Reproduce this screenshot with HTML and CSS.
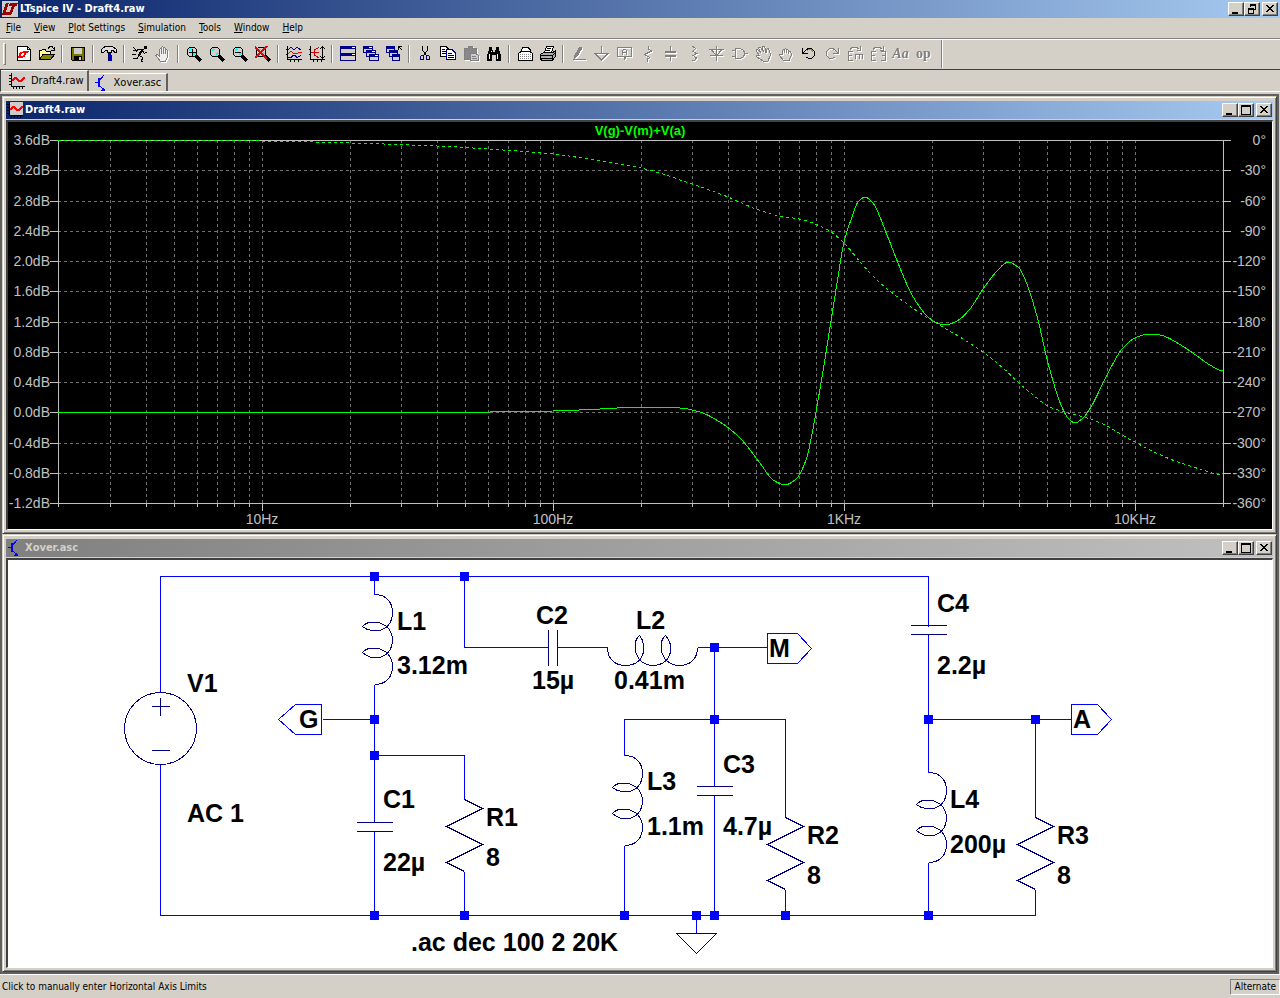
FILE: index.html
```html
<!DOCTYPE html>
<html lang="en">
<head>
  <meta charset="UTF-8">
  <meta name="viewport" content="width=device-width, initial-scale=1.0">
  <title>LTspice IV - Draft4.raw</title>
  <link rel="stylesheet" href="styles.css">
</head>
<body>
  <!-- Shared icons and schematic symbols -->
  <svg class="defs" width="0" height="0" aria-hidden="true">
    <symbol id="logo" viewBox="0 0 16 16">
      <rect width="16" height="16" fill="#ccc"/>
      <path d="M4 2H7L4 11H8L7 14H0ZM8 2H16L15 5H13L9 14H7L10 5H7Z" fill="#900"/>
    </symbol>
    <symbol id="wave" viewBox="0 0 16 16">
      <rect x="2" width="14" height="13" fill="#ccc"/>
      <path d="M2.500 0V13.500H16M0 2.500H2M0 5.500H2M0 8.500H2M0 11.500H2M4.500 14V16M7.500 14V16M10.500 14V16M13.500 14V16" stroke="#000" fill="none"/>
      <path d="M3 8V6H4V5H5V4H8V5H9V6H10V7H12V6H13V5H14V4H16V6H15V7H14V8H13V9H9V8H8V7H7V6H6V7H5V8Z" fill="#f00"/>
    </symbol>
    <symbol id="transistor" viewBox="0 0 16 16">
      <path d="M1 7.500H5M5 6L10 0M5 10L9 14" stroke="#00f" fill="none"/>
      <path d="M4 3H6V12H4ZM11 16H7L10 12Z" fill="#00f"/>
    </symbol>
    <symbol id="min" viewBox="0 0 12 10"><path d="M2 8H8V10H2Z"/></symbol>
    <symbol id="max" viewBox="0 0 12 10"><path d="M1 0H11V10H1ZM2 2V9H10V2Z" fill-rule="evenodd"/></symbol>
    <symbol id="restore" viewBox="0 0 12 10"><path d="M4 0H10V6H8V5H9V2H5V3H4ZM2 4H8V10H2ZM3 6V9H7V6Z" fill-rule="evenodd"/></symbol>
    <symbol id="close" viewBox="0 0 12 10"><path d="M2 1H4V2H5V3H7V2H8V1H10V2H9V3H8V4H7V5H8V6H9V7H10V8H8V7H7V6H5V7H4V8H2V7H3V6H4V5H5V4H4V3H3V2H2Z"/></symbol>
    <symbol id="lens" viewBox="0 0 16 16">
      <circle cx="6" cy="6" r="5" fill="#d4d0c8" stroke="#000"/>
      <path d="M3 5L5 3M7 9L9 7" stroke="#0ff" stroke-width="2"/>
      <path d="M10 10L15 15" stroke="#000" stroke-width="3"/>
    </symbol>
    <g id="coil">
      <path d="M0 0C14 0 18 10 18 18C18 26 15 32 8 35C1 38 -7 36 -12 32C-7 26 4 26 12 32C16 35 18 41 18 45C18 53 15 59 8 62C1 65 -7 63 -12 58C-7 52 4 52 12 58C16 62 18 67 18 72C18 82 12 90 0 90"/>
    </g>
    <path id="resistor" d="M0 0L18 9L-18 27L18 45L-18 63L0 72"/>
    <path id="capacitor" d="M-18 0H18M-18 9H18"/>
    <rect id="node" x="-5" y="-5" width="9" height="9"/>
  </svg>

  <header class="titlebar">
    <svg class="app-icon"><use href="#logo"/></svg>
    <h1>LTspice IV - Draft4.raw</h1>
    <div class="controls">
      <button aria-label="Minimize"><svg><use href="#min"/></svg></button>
      <button aria-label="Restore"><svg><use href="#restore"/></svg></button>
      <button class="close" aria-label="Close"><svg><use href="#close"/></svg></button>
    </div>
  </header>

  <nav class="menu">
    <button><u>F</u>ile</button>
    <button><u>V</u>iew</button>
    <button><u>P</u>lot Settings</button>
    <button><u>S</u>imulation</button>
    <button><u>T</u>ools</button>
    <button><u>W</u>indow</button>
    <button><u>H</u>elp</button>
  </nav>

  <div class="toolbar">
    <span class="grip"></span>
    <button aria-label="New schematic"><svg viewBox="0 0 16 16"><path d="M1.500 .5H11.500L14.500 3.500V14.500H1.500Z" fill="#fff" stroke="#000"/><path d="M11.500 1V3.500H14" stroke="#000"/><path d="M4 6H6L5 10H8L7 12H2ZM7 5H13L12 7H10L9 11H7L8 7H6Z" fill="#f00"/></svg></button>
    <button aria-label="Open"><svg viewBox="0 0 16 16"><path d="M.5 13V4.500H2L3.500 3.500H6L7.500 5.500H11.500V8" fill="#ff9" stroke="#000"/><path d="M.5 13.500L4 8.500H15.500L11.500 13.500Z" fill="#880" stroke="#000"/><path d="M9 2.500L11 .5H13L15 3M15.500 1V4.500H12" stroke="#000"/></svg></button>
    <span class="sep"></span>
    <button aria-label="Save"><svg viewBox="0 0 16 16"><path d="M1.500 1.500H14.500V14.500H2.500L1.500 13.500Z" fill="#770" stroke="#000"/><path d="M4 2H12V8H4Z" fill="#ccc"/><path d="M4 10H12V14H4Z" fill="#000"/><path d="M9 11H11V14H9Z" fill="#ccc"/></svg></button>
    <span class="sep"></span>
    <button aria-label="Control panel"><svg viewBox="0 0 16 16"><path d="M.5 3.500L4 .5H11.500L15.500 3.500V6.500H13.500L12.500 4.500H10.500V6.500H6.500V4.500H4.500L2.500 6.500H.5Z" fill="#ddd" stroke="#000"/><path d="M7 7H10V9H11V15H7V9H7Z" fill="#00c"/><path d="M7.500 8V15" stroke="#006"/></svg></button>
    <span class="sep"></span>
    <button aria-label="Run"><svg viewBox="0 0 16 16"><path d="M12 0H15V3H12Z" fill="#000"/><path d="M11 3L7 9" stroke="#000" stroke-width="2"/><path d="M7 9.500L10.500 11.500L9.500 15.500H11M7 9L5 12.500H1M10 3.500H6L4 5.500M11 5L12.500 7.500L15 6M1 1.500L4 3.500M1 4.500H4M0 8.500H4" stroke="#000"/></svg></button>
    <button class="off" disabled aria-label="Halt"><svg viewBox="0 0 16 16"><path d="M4.500 9.500V3.500Q5.500 1.500 6.500 3.500V1.500Q7.500 -.5 8.500 1.500V2Q10 .5 10.500 3V4Q12 2.500 12.500 5V11L10.500 15.500H5.500L1 9.500Q1.500 7.500 4.500 10Z" fill="#eee"/><path d="M6.500 3V8M8.500 2V8M10.500 4V8"/></svg></button>
    <span class="sep"></span>
    <button aria-label="Zoom in"><svg viewBox="0 0 16 16"><use href="#lens"/><path d="M3 6.500H10M6.500 3V10" stroke="#000"/></svg></button>
    <button aria-label="Pan"><svg viewBox="0 0 16 16"><use href="#lens"/></svg></button>
    <button aria-label="Zoom out"><svg viewBox="0 0 16 16"><use href="#lens"/><path d="M3 6.500H9" stroke="#000"/></svg></button>
    <button aria-label="Zoom full extents"><svg viewBox="0 0 16 16"><use href="#lens"/><path d="M0 1L12 13M12 0L0 12" stroke="#e00" stroke-width="2"/></svg></button>
    <span class="sep"></span>
    <button aria-label="Autorange"><svg viewBox="0 0 16 16"><path d="M1.500 0V13.500H16M0 3.500H2M0 8.500H2M4.500 13V16M8.500 13V16M12.500 13V16" stroke="#000"/><path d="M2 4L5 1L8 4L11 1L15 4M2 11.500H5L7 9.500H9L11 11.500L15 9.500" stroke="#009"/><path d="M2 7.500L5 5.500L8 7.500H11L13 6.500H16" stroke="#f00"/></svg></button>
    <button aria-label="Autorange axis"><svg viewBox="0 0 16 16"><path d="M1.500 0V13.500H16M0 3.500H2M0 8.500H2M4.500 13V16M8.500 13V16M12.500 13V16M13.500 1V12M11 3L13.500 .5L16 3M11 10L13.500 12.500L16 10" stroke="#000"/><path d="M10 1.500L5.500 4V9L10 12M2 6.500H10" stroke="#c00"/></svg></button>
    <span class="sep"></span>
    <button aria-label="Tile"><svg viewBox="0 0 16 16"><path d="M.5 .5H15.500V14.500H.5ZM0 7.500H16" stroke="#008"/><path d="M0 0H16V3H0ZM0 7H16V10H0Z" fill="#008"/><path d="M12 1.500H15M12 8.500H15" stroke="#fff"/></svg></button>
    <button aria-label="Cascade"><svg viewBox="0 0 16 16"><path d="M.5 .5H9.500V6.500H.5ZM3.500 4.500H12.500V10.500H3.500ZM6.500 8.500H15.500V14.500H6.500Z" fill="#d4d0c8" stroke="#008"/><path d="M0 0H10V3H0ZM3 4H13V7H3ZM6 8H16V11H6Z" fill="#008"/><path d="M6 1.500H9M9 5.500H12M12 9.500H15" stroke="#fff"/></svg></button>
    <button aria-label="Close all"><svg viewBox="0 0 16 16"><path d="M.5 .5H8.500V6.500H.5ZM3.500 4.500H11.500V10.500H3.500ZM6.500 8.500H13.500V14.500H6.500Z" fill="#d4d0c8" stroke="#008"/><path d="M0 0H9V3H0ZM3 4H12V7H3ZM6 8H14V11H6Z" fill="#008"/><path d="M12.500 4V.5H16M12.500 .5L16 4" stroke="#000"/></svg></button>
    <span class="sep"></span>
    <button aria-label="Cut"><svg viewBox="0 0 16 16"><path d="M5.500 0V4L9.500 10M10.500 0V4L6.500 10" stroke="#000"/><path d="M4.500 9.500H6.500V13.500H3.500V10.500ZM9.500 9.500H11.500L12.500 10.500V13.500H9.500Z" stroke="#008"/></svg></button>
    <button aria-label="Copy"><svg viewBox="0 0 16 16"><path d="M.5 .5H6L8.500 3V10.500H.5Z" fill="#fff" stroke="#000"/><path d="M6.500 3.500H12L15.500 7V13.500H6.500Z" fill="#fff" stroke="#008"/><path d="M2 3.500H5M2 5.500H6M2 7.500H6M8 7.500H12M8 9.500H14M8 11.500H14" stroke="#000"/></svg></button>
    <button class="off" disabled aria-label="Paste"><svg viewBox="0 0 16 16"><path d="M1 2H5V0H9V2H13V7H7V13H1Z" fill="#888"/><path d="M7.500 7.500H12.500L15.500 9.500V14.500H7.500ZM9 10.500H13M9 12.500H14" fill="#ccc"/></svg></button>
    <button aria-label="Find"><svg viewBox="0 0 16 16"><path d="M3 1H6V4H7V6H9V4H10V1H13V4L15 9V15H10V9H6V15H1V9L3 4Z" fill="#000"/><path d="M3.500 8V13M11.500 8V13M5.500 5V6" stroke="#fff"/></svg></button>
    <span class="sep"></span>
    <button aria-label="Print setup"><svg viewBox="0 0 16 16"><path d="M3.500 7L5.500 1.500H11L13.500 4V7M1.500 7.500L3.500 5.500H13.500L15.500 7.500V14.500H1.500Z" fill="#fff" stroke="#000"/><path d="M3 8.500H14M3 10.500H14M3 12.500H14" stroke="#888" stroke-dasharray="1 1"/></svg></button>
    <button aria-label="Print"><svg viewBox="0 0 16 16"><path d="M4.500 7L6.500 .5H13.500L11.500 7" fill="#fff" stroke="#000"/><path d="M.5 8.500L3.500 6.500H13L15.500 4.500V10L12.500 14.500H1.500L.5 12.500Z" fill="#aaa" stroke="#000"/><path d="M1 9.500H12.500V14M12.500 9.500L15 7M7 2.500H11M6 4.500H10M1 12.500H12" stroke="#000"/><path d="M7 11H10V12H7Z" fill="#fc0"/></svg></button>
    <span class="sep"></span>
    <button class="off" disabled aria-label="Wire"><svg viewBox="0 0 16 16"><path d="M9 1L4 9L3 13L6 10L11 2Z" fill="#888"/><path d="M2 13.500H15"/></svg></button>
    <button class="off" disabled aria-label="Ground"><svg viewBox="0 0 16 16"><path d="M7.500 0V7.500M1 7.500H14L7.500 14Z"/></svg></button>
    <button class="off" disabled aria-label="Label net"><svg viewBox="0 0 16 16"><path d="M.5 1.500H14.500V10.500H9L7.500 14V10.500H.5ZM5.500 9V4.500L6.500 3.500H8.500L9.500 4.500V9M5.500 6.500H9"/></svg></button>
    <button class="off" disabled aria-label="Resistor"><svg viewBox="0 0 16 16"><path d="M8.500 0V3L11.500 5L4.500 8.500L9.500 11.500L7.500 13V16"/></svg></button>
    <button class="off" disabled aria-label="Capacitor"><svg viewBox="0 0 16 16"><path d="M7.500 0V6M7.500 10V15"/><path d="M2 6H13M2 10H13" stroke-width="2"/></svg></button>
    <button class="off" disabled aria-label="Inductor"><svg viewBox="0 0 16 16"><path d="M6 .5H7L9.500 2.500L7 5.500L10.500 7.500L7 9.500L10.500 12L8.500 14.500H6"/></svg></button>
    <button class="off" disabled aria-label="Diode"><svg viewBox="0 0 16 16"><path d="M7.500 0V15M0 3.500H15M2 3.500L7.500 9.500L13 3.500M1 9.500H14"/></svg></button>
    <button class="off" disabled aria-label="Component"><svg viewBox="0 0 16 16"><path d="M3.500 2.500H8Q12.500 4 12.500 7.500Q12.500 11 8 12.500H3.500ZM0 4.500H3M0 10.500H3M12 7.500H16"/></svg></button>
    <button class="off" disabled aria-label="Move"><svg viewBox="0 0 16 16"><path d="M5 10L1 5Q1 3 3 4L6 7L3.500 2Q4 0 6 2L8.500 6L7.500 1Q9 -1 10 2L11 7L12 3Q14 2 14 4L15.500 9L13 15H8L2 11Q0 9 5 10"/></svg></button>
    <button class="off" disabled aria-label="Drag"><svg viewBox="0 0 16 16"><path d="M4.500 9V4.500Q5.500 2.500 6.500 4V7V3.500Q8 1.500 8.500 4V7V4Q10 2.500 10.500 5V7Q12.500 4 13 7V10L11 14.500H5.500L1.500 9.500Q1.500 7.500 4.500 9"/></svg></button>
    <button aria-label="Undo"><svg viewBox="0 0 16 16"><path d="M1.500 2V7.500H7M1.500 7.500L5.500 3.500L7.500 2.500H10.500L13.500 5.500V9.500L10.500 12.500H7.500L5.500 11" stroke="#000"/><path d="M6 4.500L8 3.500H10L12 5.500" stroke="#990"/></svg></button>
    <button class="off" disabled aria-label="Redo"><svg viewBox="0 0 16 16"><path d="M14.500 2V7.500H9M14.500 7.500L10.500 3.500L8.500 2.500H5.500L2.500 5.500V9.500L5.500 12.500H8.500L10.500 11"/></svg></button>
    <button class="off" disabled aria-label="Rotate"><svg viewBox="0 0 16 16"><path d="M6 5.500H1.500V14.500H6M1.500 9.500H5M15.500 13V8.500H8.500V13M12.500 9V13M3 3.500L5 1.500H10L12.500 3.500M13.500 0V4.500H10"/></svg></button>
    <button class="off" disabled aria-label="Mirror"><svg viewBox="0 0 16 16"><path d="M6 5.500H1.500V14.500H6M1.500 9.500H5M11 5.500H15.500V14.500H11M15.500 9.500H12M3 3.500L5 1.500H10L12.500 3.500M13.500 0V4.500H10"/></svg></button>
    <button class="off glyph" disabled aria-label="Text"><i>Aa</i></button>
    <button class="off glyph" disabled aria-label="SPICE directive">op</button>
    <span class="toolbar-end"></span>
  </div>

  <div class="tabs">
    <button class="tab active"><svg><use href="#wave"/></svg>Draft4.raw</button>
    <button class="tab"><svg><use href="#transistor"/></svg>Xover.asc</button>
  </div>

  <main class="workspace">
    <section class="window">
      <div class="titlebar">
        <svg class="app-icon"><use href="#wave"/></svg>
        <h2>Draft4.raw</h2>
        <div class="controls">
          <button aria-label="Minimize"><svg><use href="#min"/></svg></button>
          <button aria-label="Maximize"><svg><use href="#max"/></svg></button>
          <button class="close" aria-label="Close"><svg><use href="#close"/></svg></button>
        </div>
      </div>
      <div class="view plot">
        <svg viewBox="8 122 1264 407">
          <path id="grid" class="grid"/>
          <path id="axes" class="axes"/>
          <g id="labels" class="labels"></g>
          <text class="trace-name" x="640" y="135">V(g)-V(m)+V(a)</text>
          <path id="phase" class="trace dashed"/>
          <path id="gain" class="trace"/>
        </svg>
      </div>
    </section>

    <section class="window inactive">
      <div class="titlebar">
        <svg class="app-icon"><use href="#transistor"/></svg>
        <h2>Xover.asc</h2>
        <div class="controls">
          <button aria-label="Minimize"><svg><use href="#min"/></svg></button>
          <button aria-label="Maximize"><svg><use href="#max"/></svg></button>
          <button class="close" aria-label="Close"><svg><use href="#close"/></svg></button>
        </div>
      </div>
      <div class="view schematic">
        <svg viewBox="8 560 1264 407">
          <!-- Wires and net flags -->
          <g class="wires" transform="translate(.5 .5)">
            <path d="M160 692V576H928V626M160 763V915H1035V889M374 576V594M374 684V822M374 831V915M464 576V647H548M557 647H607M697 647H767M322 719H374M374 755H464V799M464 871V915M714 647V786M714 795V915M624 755V719H785V817M624 845V915M785 889V915M928 634V772M928 862V915M928 719H1071M1035 719V817M696 915V933"/>
            <path d="M321 704H295L278 719L295 734H321ZM767 633H797L811 648L797 663H767ZM1071 704H1097L1111 719L1097 734H1071Z"/>
          </g>
          <!-- Components -->
          <g class="parts" transform="translate(.5 .5)">
            <circle cx="160" cy="728" r="36"/>
            <path d="M151 706H169M160 697V715M151 750H169"/>
            <use href="#coil" x="374" y="594"/>
            <use href="#coil" transform="matrix(0 1 1 0 607 647)"/>
            <use href="#coil" x="624" y="755"/>
            <use href="#coil" x="928" y="772"/>
            <use href="#resistor" x="464" y="799"/>
            <use href="#resistor" x="785" y="817"/>
            <use href="#resistor" x="1035" y="817"/>
            <use href="#capacitor" x="374" y="822"/>
            <use href="#capacitor" x="714" y="786"/>
            <use href="#capacitor" x="928" y="625"/>
            <use href="#capacitor" transform="matrix(0 1 1 0 548 647)"/>
            <path d="M676 933H716L696 953Z"/>
          </g>
          <!-- Junctions -->
          <g class="nodes">
            <use href="#node" x="375" y="577"/><use href="#node" x="465" y="577"/>
            <use href="#node" x="375" y="720"/><use href="#node" x="375" y="756"/>
            <use href="#node" x="715" y="648"/><use href="#node" x="715" y="720"/>
            <use href="#node" x="929" y="720"/><use href="#node" x="1036" y="720"/>
            <use href="#node" x="375" y="916"/><use href="#node" x="465" y="916"/>
            <use href="#node" x="625" y="916"/><use href="#node" x="697" y="916"/>
            <use href="#node" x="715" y="916"/><use href="#node" x="786" y="916"/>
            <use href="#node" x="929" y="916"/>
          </g>
          <g class="names">
            <text x="187" y="692">V1</text><text x="187" y="822">AC 1</text>
            <text x="397" y="630">L1</text><text x="397" y="674">3.12m</text>
            <text x="299" y="728">G</text><text x="769" y="657">M</text><text x="1073" y="728">A</text>
            <text x="383" y="808">C1</text><text x="383" y="871">22µ</text>
            <text x="486" y="826">R1</text><text x="486" y="866">8</text>
            <text x="536" y="624">C2</text><text x="532" y="689">15µ</text>
            <text x="636" y="629">L2</text><text x="614" y="689">0.41m</text>
            <text x="647" y="790">L3</text><text x="647" y="835">1.1m</text>
            <text x="723" y="773">C3</text><text x="723" y="835">4.7µ</text>
            <text x="807" y="844">R2</text><text x="807" y="884">8</text>
            <text x="937" y="612">C4</text><text x="937" y="674">2.2µ</text>
            <text x="950" y="808">L4</text><text x="950" y="853">200µ</text>
            <text x="1057" y="844">R3</text><text x="1057" y="884">8</text>
            <text x="411" y="951">.ac dec 100 2 20K</text>
          </g>
        </svg>
      </div>
    </section>
  </main>

  <footer class="status">
    <span>Click to manually enter Horizontal Axis Limits</span>
    <span class="panel">Alternate</span>
  </footer>

  <script src="plot.js"></script>
</body>
</html>
```
FILE: styles.css
```css
/* Basic reset */
* {
  margin: 0;
  padding: 0;
  box-sizing: border-box;
}

body {
  height: 100vh;
  display: flex;
  flex-direction: column;
  background-color: #d4d0c8;
  color: #000;
  font-family: "DejaVu Sans Condensed", "DejaVu Sans", sans-serif;
  font-size: 10px;
  line-height: 14px;
}

button {
  border: none;
  background: none;
  color: inherit;
  font: inherit;
}

svg {
  display: block;
  fill: none;
  shape-rendering: crispEdges;
}

.defs {
  position: absolute;
}

/* Title bars */
.titlebar {
  flex: none;
  height: 18px;
  padding: 0 2px;
  display: flex;
  align-items: center;
  gap: 2px;
  background: linear-gradient(to right, #0a246a, #a6caf0);
  color: #fff;
}

.titlebar h1,
.titlebar h2 {
  flex: 1;
  font-size: 11px;
  font-weight: bold;
}

.app-icon {
  width: 16px;
  height: 16px;
}

.controls {
  display: flex;
}

.controls button {
  width: 16px;
  height: 14px;
  padding: 1px;
  background-color: #d4d0c8;
  border: 1px solid;
  border-color: #fff #404040 #404040 #fff;
  box-shadow: inset -1px -1px #808080;
}

.controls .close {
  margin-left: 2px;
}

.controls svg {
  width: 12px;
  height: 10px;
  fill: #000;
}

/* Menu */
.menu {
  flex: none;
  height: 21px;
  padding: 0 6px;
  display: flex;
  align-items: center;
  gap: 13px;
  border-bottom: 1px solid #808080;
}

/* Toolbar */
.toolbar {
  flex: none;
  height: 31px;
  padding: 0 0 2px 3px;
  display: flex;
  align-items: center;
  border-top: 1px solid #fff;
  border-bottom: 1px solid #404040;
}

.toolbar button {
  width: 23px;
  height: 22px;
  display: flex;
  align-items: center;
  justify-content: center;
}

.toolbar svg {
  width: 16px;
  height: 16px;
}

.toolbar .off {
  color: #808080;
  filter: drop-shadow(1px 1px 0 #fff);
}

.off svg {
  stroke: #808080;
}

.toolbar .glyph {
  font: bold 14px "Liberation Serif", serif;
}

.grip {
  width: 3px;
  height: 22px;
  margin-right: 6px;
  border: 1px solid;
  border-color: #fff #808080 #808080 #fff;
}

.sep {
  width: 2px;
  height: 18px;
  margin: 0 3px;
  border-left: 1px solid #808080;
  border-right: 1px solid #fff;
}

.toolbar-end {
  height: 28px;
  margin-left: 6px;
  border-left: 1px solid #808080;
  border-right: 1px solid #fff;
}

/* Document tabs */
.tabs {
  flex: none;
  height: 22px;
  display: flex;
  align-items: flex-end;
  border-left: 1px solid #404040;
  border-bottom: 1px solid #fff;
}

.tab {
  height: 18px;
  padding: 0 5px;
  display: flex;
  align-items: center;
  gap: 4px;
  border-right: 2px solid #606060;
  border-top: 1px solid #fff;
  font-size: 11px;
}

.tab.active {
  height: 21px;
  padding: 0 3px 1px 8px;
  gap: 6px;
}

.tab svg {
  width: 16px;
  height: 16px;
}

/* Child windows */
.workspace {
  flex: 1;
  min-height: 0;
  margin: 2px 1px 0 0;
  display: flex;
  flex-direction: column;
  border: 2px solid #606060;
}

.window {
  flex: 1 1 0;
  min-height: 0;
  padding: 3px;
  display: flex;
  flex-direction: column;
  border: 1px solid;
  border-color: #d4d0c8 #404040 #404040 #d4d0c8;
  box-shadow: inset 1px 1px #fff, inset -1px -1px #808080;
}

.window .titlebar {
  margin: 1px 0;
  padding: 0 1px;
}

.inactive .titlebar {
  background: linear-gradient(to right, #808080, #c0c0c0);
  color: #d4d0c8;
}

.view {
  flex: 1;
  min-height: 0;
  border: 1px solid;
  border-width: 2px 1px 1px 2px;
  border-color: #404040 #fff #fff #404040;
}

.view svg {
  width: 100%;
  height: 100%;
}

/* Bode plot */
.plot {
  background-color: #000;
}

.grid {
  stroke: #707070;
  stroke-dasharray: 3 3;
}

.axes {
  stroke: #c0c0c0;
}

.labels {
  fill: #c0c0c0;
  font: 14px "Liberation Sans", Arial, sans-serif;
}

.end {
  text-anchor: end;
}

.middle,
.trace-name {
  text-anchor: middle;
}

.trace-name {
  fill: #0f0;
  font: bold 13px "Liberation Sans", Arial, sans-serif;
}

.trace {
  stroke: #0f0;
}

.dashed {
  stroke-dasharray: 3 3;
}

/* Schematic */
.schematic {
  background-color: #fff;
}

.wires {
  stroke: #00f;
}

.parts {
  stroke: #000080;
}

.nodes {
  fill: #00f;
}

.names {
  fill: #000;
  font: bold 25px "Liberation Sans", Arial, sans-serif;
}

/* Status bar */
.status {
  flex: none;
  height: 24px;
  padding-left: 2px;
  display: flex;
  align-items: center;
  justify-content: space-between;
  border-top: 1px solid #fff;
}

.panel {
  padding: 0 3px;
  border: 1px solid;
  border-color: #808080 #fff #fff #808080;
}
```
FILE: plot.js
```js
const left = 58, right = 1223, top_ = 140, bottom = 503;
const decade = 291, step = 30.25;

const gain = [
  [58, 412], [490, 412], [553, 411], [600, 409], [641, 407], [680, 408], [700, 412],
  [720, 422], [740, 438], [760, 463], [773, 480], [785, 485], [796, 479], [806, 460],
  [820, 389], [831, 321], [838, 277], [844, 242], [852, 217], [858, 202], [865, 197],
  [873, 203], [887, 235], [898, 263], [912, 295], [927, 316], [935, 322], [945, 325],
  [957, 321], [970, 309], [983, 289], [997, 271], [1008, 262], [1019, 268], [1028, 287],
  [1038, 320], [1048, 363], [1061, 405], [1068, 418], [1075, 423], [1083, 418],
  [1091, 407], [1107, 375], [1122, 349], [1135, 338], [1148, 334], [1160, 335],
  [1187, 349], [1210, 365], [1223, 371]
];

const phase = [
  [58, 140], [130, 140], [262, 141], [350, 143], [437, 146], [488, 149], [553, 154],
  [600, 161], [641, 168], [692, 184], [728, 197], [756, 209], [779, 216], [799, 219],
  [820, 226], [831, 232], [844, 243], [861, 263], [878, 281], [895, 295], [920, 313],
  [948, 330], [963, 339], [983, 352], [1003, 368], [1020, 384], [1033, 395], [1050, 407],
  [1068, 413], [1087, 418], [1107, 426], [1122, 435], [1135, 442], [1148, 449],
  [1175, 461], [1200, 469], [1223, 475]
];

// Smooth curve through all the points
function curve(points) {
  let d = `M${points[0]}`;
  for (let i = 0; i < points.length - 1; i++) {
    const a = points[i], b = points[i + 1];
    const h = (b[0] - a[0]) / 3;
    d += `C${a[0] + h} ${a[1] + slope(points, i) * h} ${b[0] - h} ${b[1] - slope(points, i + 1) * h} ${b}`;
  }
  return d;
}

function slope(points, i) {
  const p = points[i - 1], c = points[i], n = points[i + 1];
  if (!p || !n) return 0;
  const s1 = (c[1] - p[1]) / (c[0] - p[0]);
  const s2 = (n[1] - c[1]) / (n[0] - c[0]);
  // Flat at peaks and valleys
  return s1 * s2 <= 0 ? 0 : 2 * s1 * s2 / (s1 + s2);
}

function label(text, x, y, className) {
  const el = document.createElementNS("http://www.w3.org/2000/svg", "text");
  el.setAttribute("x", x);
  el.setAttribute("y", y);
  if (className) el.setAttribute("class", className);
  el.textContent = text;
  document.getElementById("labels").appendChild(el);
}

let grid = "";
let axes = `M${left + 0.5} ${top_}V${bottom + 4}M${right + 0.5} ${top_}V${bottom + 4}`;
axes += `M${left} ${top_ + 0.5}H${right}M${left} ${bottom + 0.5}H${right}`;

// Horizontal lines with gain on the left and phase on the right
for (let i = 0; i <= 12; i++) {
  const y = Math.round(top_ + i * step);
  if (i > 0 && i < 12) grid += `M${left} ${y + 0.5}H${right}`;
  axes += `M${left - 8} ${y + 0.5}h8M${right} ${y + 0.5}h8`;
  label((3.6 - i * 0.4).toFixed(1).replace("-0.0", "0.0") + "dB", 50, y + 5, "end");
  label(i * -30 + "°", 1266, y + 5, "end");
}

// Vertical lines for 3Hz to 10KHz
for (let d = 0; d < 4; d++) {
  for (let n = 2; n <= 10; n++) {
    const x = Math.round(262 + decade * (d - 1 + Math.log10(n)));
    if (x <= left + 1 || x >= right) continue;
    grid += `M${x + 0.5} ${top_}V${bottom}`;
    axes += `M${x + 0.5} ${bottom}v${n === 10 ? 8 : 4}`;
  }
}

["10Hz", "100Hz", "1KHz", "10KHz"].forEach((text, i) => {
  label(text, 262 + i * decade, 524, "middle");
});

document.getElementById("grid").setAttribute("d", grid);
document.getElementById("axes").setAttribute("d", axes);
document.getElementById("gain").setAttribute("d", curve(gain));
document.getElementById("phase").setAttribute("d", curve(phase));
```
